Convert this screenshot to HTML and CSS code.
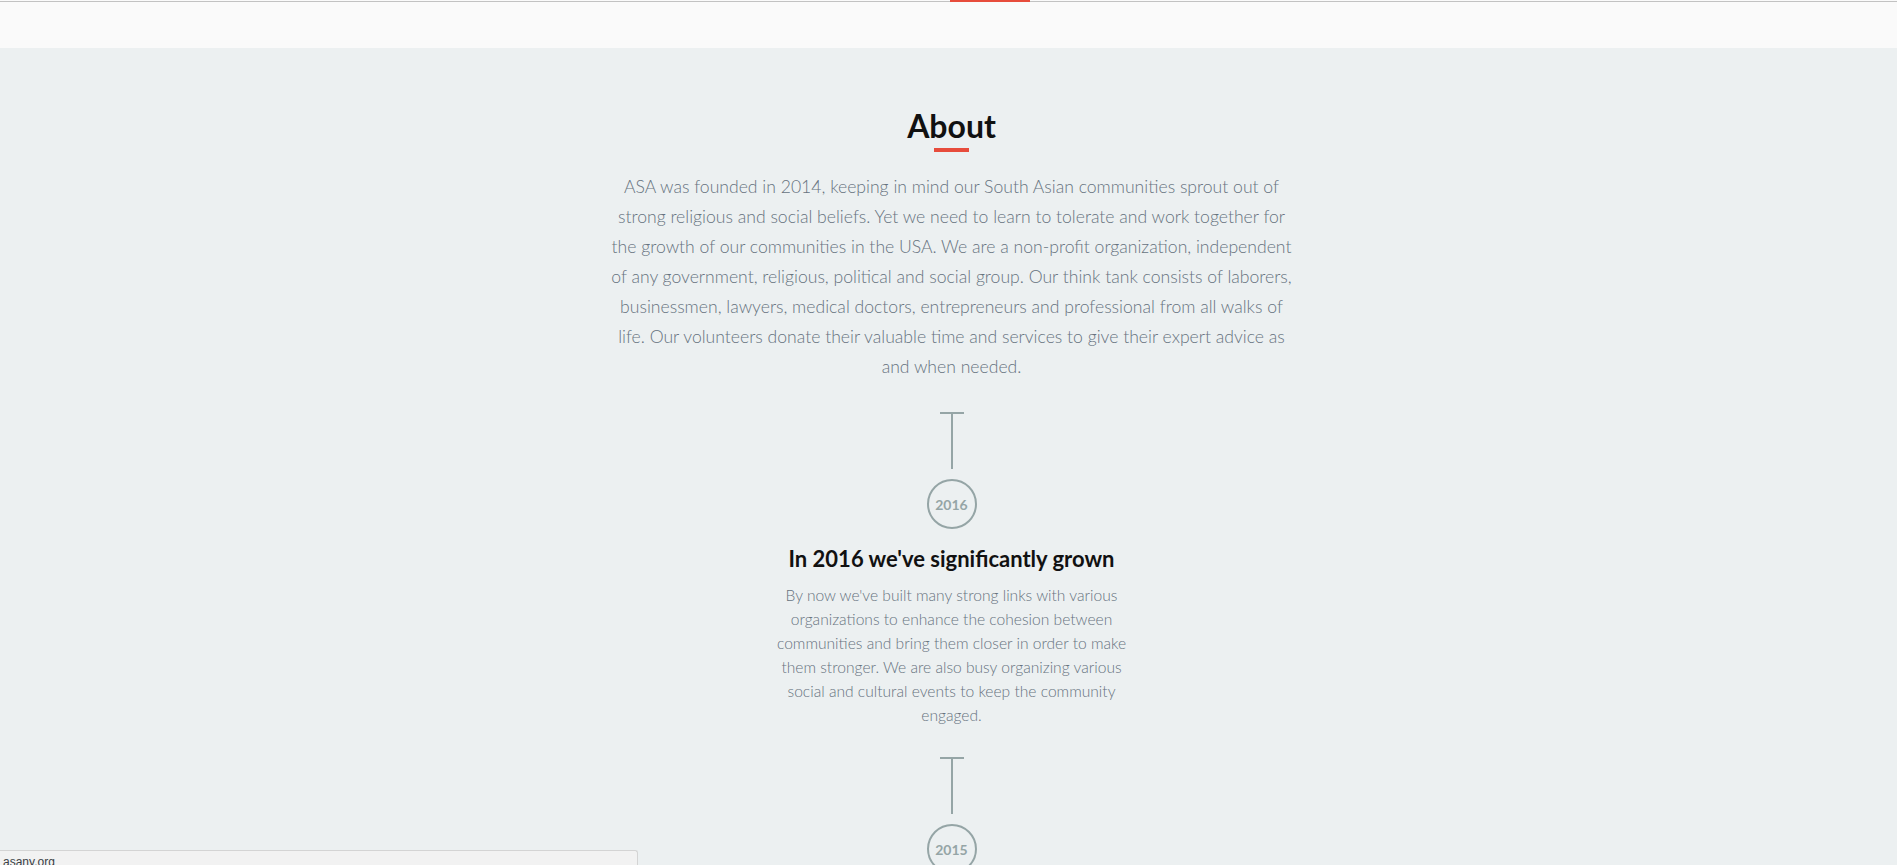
FILE: index.html
```html
<!DOCTYPE html>
<html lang="en">
<head>
<meta charset="utf-8">
<title>About - ASA</title>
<link rel="stylesheet" href="styles.css">
</head>
<body>
<div class="page">
  <header class="topbar">
    <div class="topbar-rule"></div>
    <div class="topbar-active"></div>
  </header>
  <main class="about">
    <div class="about-inner">
      <h2 class="about-title">About</h2>
      <div class="about-underline"></div>
      <p class="about-text">ASA was founded in 2014, keeping in mind our South Asian communities sprout out of strong religious and social beliefs. Yet we need to learn to tolerate and work together for the growth of our communities in the USA. We are a non-profit organization, independent of any government, religious, political and social group. Our think tank consists of laborers, businessmen, lawyers, medical doctors, entrepreneurs and professional from all walks of life. Our volunteers donate their valuable time and services to give their expert advice as and when needed.</p>

      <div class="timeline">
        <div class="tl-item">
          <div class="tl-stem"><span class="tl-cap"></span><span class="tl-line"></span></div>
          <div class="tl-year">2016</div>
          <h3 class="tl-title">In 2016 we've significantly grown</h3>
          <p class="tl-text">By now we've built many strong links with various organizations to enhance the cohesion between communities and bring them closer in order to make them stronger. We are also busy organizing various social and cultural events to keep the community engaged.</p>
        </div>
        <div class="tl-item">
          <div class="tl-stem"><span class="tl-cap"></span><span class="tl-line"></span></div>
          <div class="tl-year">2015</div>
        </div>
      </div>
    </div>
  </main>
  <div class="status-bubble">asany.org</div>
</div>
</body>
</html>
```

FILE: styles.css
```css
html, body {
  margin: 0;
  padding: 0;
}
body {
  font-family: Lato, "Open Sans", Arial, sans-serif;
  background: #ecf0f1;
}
.page {
  position: relative;
  height: 865px;
  overflow: hidden;
  background: #ecf0f1;
}
.topbar {
  position: relative;
  height: 48px;
  background: #fafafa;
  box-sizing: border-box;
  padding-top: 1px;
}
.topbar-rule {
  height: 1px;
  background: #c2c2c2;
}
.topbar-active {
  position: absolute;
  top: 0;
  left: 950px;
  width: 80px;
  height: 2px;
  background: #e74c3c;
}
.about {
  background: #ecf0f1;
  padding: 60px 0 0 6px;
}
.about-inner {
  display: flex;
  flex-direction: column;
  align-items: center;
}
.about-title {
  margin: 0;
  font-size: 32px;
  font-weight: 700;
  line-height: 35px;
  height: 35px;
  color: #111;
}
.about-underline {
  width: 35px;
  height: 4px;
  margin-top: 5px;
  background: #e74c3c;
}
.about-text {
  margin: 20px 0 0;
  width: 688px;
  font-size: 17.6px;
  font-weight: 300;
  line-height: 30px;
  color: #67737f;
  text-align: center;
}
.timeline {
  display: flex;
  flex-direction: column;
  align-items: center;
}
.tl-item {
  display: flex;
  flex-direction: column;
  align-items: center;
  margin-top: 30px;
}
.tl-stem {
  display: flex;
  flex-direction: column;
  align-items: center;
}
.tl-cap {
  display: block;
  width: 24px;
  height: 2px;
  background: #95a5a6;
}
.tl-line {
  display: block;
  width: 2px;
  height: 55px;
  background: #95a5a6;
}
.tl-year {
  margin-top: 10px;
  width: 50px;
  height: 50px;
  box-sizing: border-box;
  border: 2px solid #95a5a6;
  border-radius: 50%;
  display: flex;
  align-items: center;
  justify-content: center;
  font-size: 14px;
  font-weight: 700;
  color: #95a5a6;
}
.tl-title {
  margin: 18px 0 0;
  font-size: 22px;
  font-weight: 700;
  line-height: 24px;
  color: #111;
}
.tl-text {
  margin: 12px 0 0;
  width: 360px;
  font-size: 15.6px;
  font-weight: 300;
  line-height: 24px;
  color: #67737f;
  text-align: center;
}
.status-bubble {
  position: absolute;
  left: 0;
  bottom: 0;
  width: 634px;
  height: 10px;
  padding: 4px 0 0 3px;
  border-top: 1px solid #d4d4d4;
  border-right: 1px solid #d4d4d4;
  border-top-right-radius: 3px;
  background: #f2f2f2;
  font-family: "Liberation Sans", Arial, sans-serif;
  font-size: 12px;
  line-height: 15px;
  color: #3a3f45;
  overflow: hidden;
}
```
